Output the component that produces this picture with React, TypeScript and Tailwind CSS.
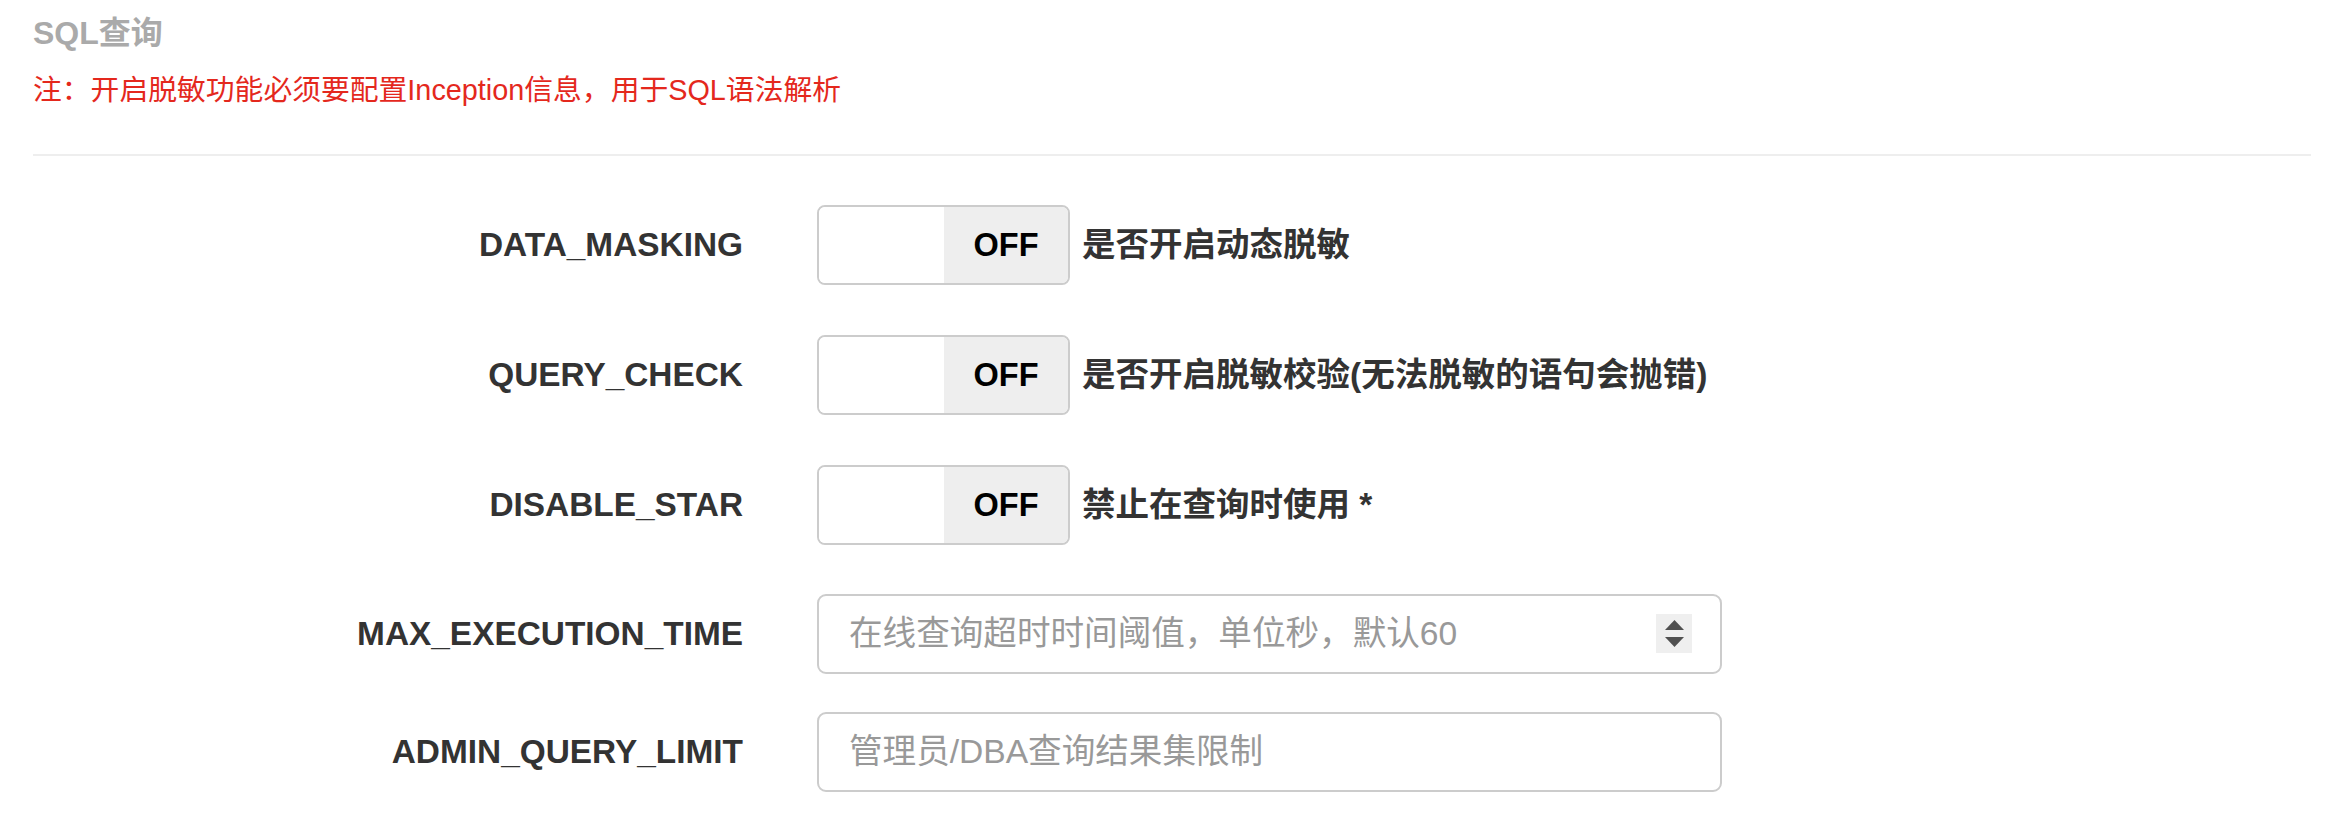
const font = {
  fontFamily: '"Liberation Sans", "Noto Sans CJK SC", sans-serif',
};

type ToggleRow = { name: string; desc: string };

const toggles: ToggleRow[] = [
  { name: "DATA_MASKING", desc: "是否开启动态脱敏" },
  { name: "QUERY_CHECK", desc: "是否开启脱敏校验(无法脱敏的语句会抛错)" },
  { name: "DISABLE_STAR", desc: "禁止在查询时使用 *" },
];

function Label({ text }: { text: string }) {
  return (
    <div className="w-[710px] shrink-0 text-right text-[33.4px] font-bold text-[#333]">
      {text}
    </div>
  );
}

function Toggle() {
  return (
    <div className="flex h-[80px] w-[253px] overflow-hidden rounded-[8px] border-2 border-[#ccc]">
      <div className="w-[125px] bg-white" />
      <div className="flex flex-1 items-center justify-center bg-[#eee] text-[32.5px] font-bold text-black">
        OFF
      </div>
    </div>
  );
}

export default function App() {
  return (
    <div className="min-h-[817px] bg-white pl-[33px] pr-[24px] pt-[14px]" style={font}>
      <div className="text-[32px] font-bold leading-[38px] text-[#aaa]">SQL查询</div>
      <div className="mt-[18px] text-[28.8px] leading-[40px] text-[#e4281d]">
        注：开启脱敏功能必须要配置Inception信息，用于SQL语法解析
      </div>
      <div className="mt-[44px] h-[2px] bg-[#eee]" />

      <div className="mt-[49px] flex flex-col gap-[50px]">
        {toggles.map((t) => (
          <div key={t.name} className="flex items-center">
            <Label text={t.name} />
            <div className="ml-[74px] flex items-center gap-[12px]">
              <Toggle />
              <span className="text-[33.5px] font-bold text-[#333]">{t.desc}</span>
            </div>
          </div>
        ))}
      </div>

      <div className="mt-[49px] flex flex-col gap-[38px]">
        <div className="flex items-center">
          <Label text="MAX_EXECUTION_TIME" />
          <div className="relative ml-[74px] w-[905px]">
            <input
              type="text"
              placeholder="在线查询超时时间阈值，单位秒，默认60"
              className="h-[80px] w-full rounded-[9px] border-2 border-[#ccc] bg-white pl-[30px] text-[33.6px] text-[#555] outline-none placeholder:text-[#999]"
            />
            <div className="absolute right-[30px] top-[20px] flex h-[39px] w-[36px] flex-col items-center justify-center gap-[7px] bg-[#efefef]">
              <svg width="19" height="10" viewBox="0 0 19 10">
                <path d="M9.5 0L19 10H0Z" fill="#505050" />
              </svg>
              <svg width="19" height="10" viewBox="0 0 19 10">
                <path d="M0 0H19L9.5 10Z" fill="#505050" />
              </svg>
            </div>
          </div>
        </div>
        <div className="flex items-center">
          <Label text="ADMIN_QUERY_LIMIT" />
          <div className="ml-[74px] w-[905px]">
            <input
              type="text"
              placeholder="管理员/DBA查询结果集限制"
              className="h-[80px] w-full rounded-[9px] border-2 border-[#ccc] bg-white pl-[30px] text-[33.6px] text-[#555] outline-none placeholder:text-[#999]"
            />
          </div>
        </div>
      </div>
    </div>
  );
}
